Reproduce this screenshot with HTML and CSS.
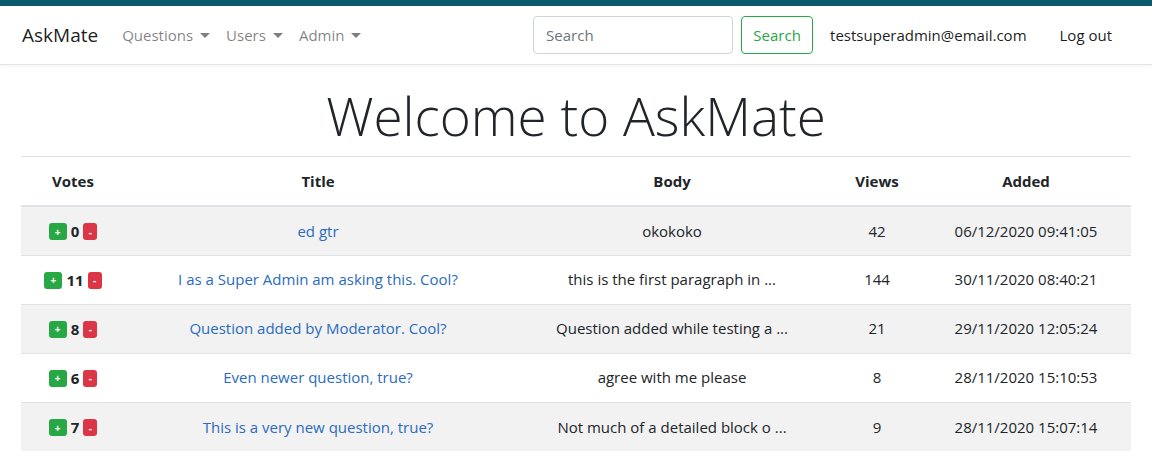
FILE: index.html
```html
<!DOCTYPE html>
<html>
<head>
<meta charset="utf-8">
<link rel="stylesheet" href="styles.css">
</head>
<body>
<div class="topline"></div>
<nav class="navbar">
  <a class="brand" href="#">AskMate</a>
  <ul class="nav">
    <li><a href="#" class="dropdown">Questions</a></li>
    <li><a href="#" class="dropdown">Users</a></li>
    <li><a href="#" class="dropdown">Admin</a></li>
  </ul>
  <form class="search">
    <input type="text" placeholder="Search">
    <button type="button">Search</button>
  </form>
  <span class="user">testsuperadmin@email.com</span>
  <a class="logout" href="#">Log out</a>
</nav>
<main class="container">
  <h1 class="display">Welcome to AskMate</h1>
  <table class="table">
    <colgroup>
      <col class="c-votes"><col class="c-title"><col class="c-body"><col class="c-views"><col class="c-added">
    </colgroup>
    <thead>
      <tr><th>Votes</th><th>Title</th><th>Body</th><th>Views</th><th>Added</th></tr>
    </thead>
    <tbody>
      <tr>
        <td><span class="vote"><span class="btn up">+</span><b>0</b><span class="btn down">-</span></span></td>
        <td><a href="#">ed gtr</a></td>
        <td>okokoko</td>
        <td>42</td>
        <td>06/12/2020 09:41:05</td>
      </tr>
      <tr>
        <td><span class="vote"><span class="btn up">+</span><b>11</b><span class="btn down">-</span></span></td>
        <td><a href="#">I as a Super Admin am asking this. Cool?</a></td>
        <td>this is the first paragraph in ...</td>
        <td>144</td>
        <td>30/11/2020 08:40:21</td>
      </tr>
      <tr>
        <td><span class="vote"><span class="btn up">+</span><b>8</b><span class="btn down">-</span></span></td>
        <td><a href="#">Question added by Moderator. Cool?</a></td>
        <td>Question added while testing a ...</td>
        <td>21</td>
        <td>29/11/2020 12:05:24</td>
      </tr>
      <tr>
        <td><span class="vote"><span class="btn up">+</span><b>6</b><span class="btn down">-</span></span></td>
        <td><a href="#">Even newer question, true?</a></td>
        <td>agree with me please</td>
        <td>8</td>
        <td>28/11/2020 15:10:53</td>
      </tr>
      <tr>
        <td><span class="vote"><span class="btn up">+</span><b>7</b><span class="btn down">-</span></span></td>
        <td><a href="#">This is a very new question, true?</a></td>
        <td>Not much of a detailed block o ...</td>
        <td>9</td>
        <td>28/11/2020 15:07:14</td>
      </tr>
    </tbody>
  </table>
</main>
</body>
</html>
```
FILE: styles.css
```css
* { box-sizing: border-box; }
html, body { margin: 0; padding: 0; }
body {
  font-family: "Open Sans", "Noto Sans", sans-serif;
  font-size: 15px;
  line-height: 1.5;
  color: #212529;
  background: #fff;
}
a { text-decoration: none; }
.topline { height: 6px; background: #0b5a6b; }
.navbar {
  display: flex;
  align-items: center;
  height: 59px;
  padding: 0 22px;
  border-bottom: 1px solid #e3e3e3;
  box-shadow: 0 2px 3px rgba(0,0,0,0.04);
}
.brand { font-size: 19px; color: rgba(0,0,0,0.9); margin-right: 24px; }
.nav { list-style: none; margin: 0; padding: 0; display: flex; gap: 16px; flex: 1; }
.nav a { color: rgba(0,0,0,0.5); font-size: 15px; }
.dropdown::after {
  content: "";
  display: inline-block;
  margin-left: 7px;
  vertical-align: 3px;
  border-top: 5px solid;
  border-left: 5px solid transparent;
  border-right: 5px solid transparent;
}
.search { display: flex; gap: 8px; margin-right: 17px; }
.search input {
  width: 200px; height: 38px;
  border: 1px solid #ced4da; border-radius: 4px;
  padding: 6px 12px; font: inherit; color: #495057;
}
.search input::placeholder { color: #6c757d; }
.search button {
  width: 72px; height: 38px; padding: 0;
  border: 1px solid #28a745; border-radius: 4px;
  background: #fff; color: #28a745; font: inherit;
}
.user { color: rgba(0,0,0,0.9); margin-right: 33px; }
.logout { color: rgba(0,0,0,0.9); margin-right: 18px; }
.container { width: 1110px; margin: 0 auto; }
.display {
  font-size: 53px; font-weight: 300; line-height: 1.2;
  text-align: center; margin: 19px 0 8px;
  color: #212529;
}
.table { width: 100%; border-collapse: collapse; table-layout: fixed; }
.c-votes { width: 104px; }
.c-title { width: 386px; }
.c-body { width: 322px; }
.c-views { width: 88px; }
.c-added { width: 210px; }
.table th, .table td {
  text-align: center; vertical-align: middle;
  padding: 0 8px; height: 49px;
  border-top: 1px solid #dee2e6;
  white-space: nowrap;
}
.table thead th { border-bottom: 2px solid #dee2e6; font-weight: 700; height: 50px; }
.table tbody tr:nth-child(odd) { background: #f2f2f2; }
.table td a { color: #2a6bbf; }
.vote { display: inline-flex; align-items: center; gap: 4px; }
.vote b { font-weight: 700; }
.btn {
  display: inline-flex; align-items: center; justify-content: center;
  height: 17px; border-radius: 3px; color: #fff; font-size: 10px; font-weight: 700;
  line-height: 1;
}
.btn.up { background: #28a745; width: 18px; }
.btn.down { background: #dc3545; width: 14px; }
```
